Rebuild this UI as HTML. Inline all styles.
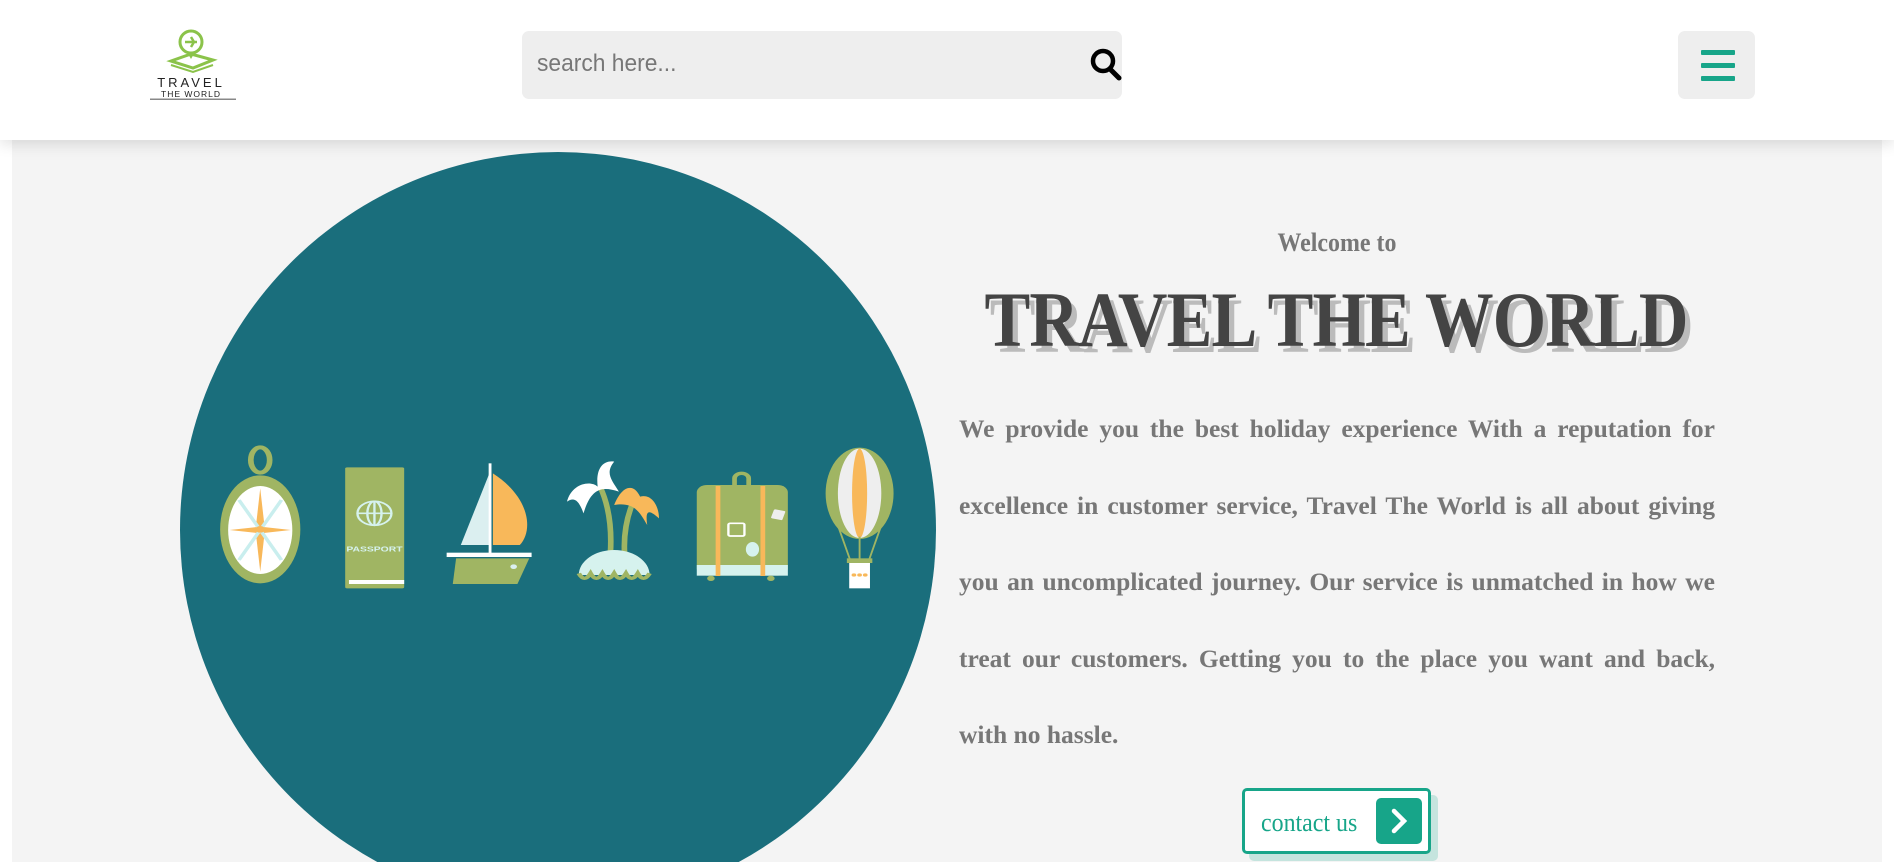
<!DOCTYPE html>
<html><head><meta charset="utf-8"><style>
*{margin:0;padding:0;box-sizing:border-box}
html,body{width:1894px;height:862px;overflow:hidden;background:#fff;font-family:"Liberation Serif",serif}
header{position:absolute;left:0;top:0;width:1894px;height:140px;background:#fff;box-shadow:0 4px 14px rgba(0,0,0,.12);z-index:2}
.search{position:absolute;left:522px;top:31px;width:600px;height:68px;background:#eee;border-radius:7px}
.search span{position:absolute;left:15px;top:19px;font:24px "Liberation Sans",sans-serif;color:#777;transform:scaleX(.95);transform-origin:left}
.menu{position:absolute;left:1678px;top:31px;width:77px;height:68px;background:#eee;border-radius:7px}
.menu i{position:absolute;left:23px;width:34px;height:5px;background:#17a589;border-radius:1px}
main{position:absolute;left:12px;top:140px;width:1870px;height:722px;background:#f4f4f4;overflow:hidden}
.circ{position:absolute;left:168px;top:12px;width:756px;height:710px;overflow:hidden}
.circ div{position:absolute;left:0;top:0;width:756px;height:756px;border-radius:50%;background:#1a6e7c}
.t{position:absolute;left:947px;width:756px;text-align:center;white-space:nowrap}
.welcome{top:88px;font-weight:bold;font-size:26px;color:#777;transform:scaleX(.92)}
.title{left:846px;width:956px;top:135px;font-weight:bold;font-size:78px;color:#444;text-shadow:6px 6px 0 #bbb;letter-spacing:-1px;transform:scaleX(.88)}
.p{position:absolute;left:947px;top:251px;width:756px;font-weight:bold;font-size:25.5px;line-height:76.5px;color:#777;text-align:justify}
.btn{position:absolute;left:1230px;top:648px;width:189px;height:66px;border:3px solid #17a589;border-radius:5px;background:#fff;box-shadow:7px 7px 0 #c5e4de}
.btn span{position:absolute;left:16px;top:17px;font-size:26px;color:#17a589;transform:scaleX(.92);transform-origin:left}
.btn b{position:absolute;left:131px;top:7px;width:46px;height:46px;background:#17a589;border-radius:5px}
</style></head><body>
<header>
<svg style="position:absolute;left:145px;top:28px" width="92" height="74" viewBox="0 0 92 74">
<circle cx="46" cy="14" r="11" fill="none" stroke="#8bc34a" stroke-width="3"/>
<path d="M40 14h12M46 9l3 5-3 5" stroke="#8bc34a" stroke-width="2.5" fill="none"/>
<path d="M42 24l4 7 4-7" fill="#8bc34a"/>
<path d="M26 33l20-7 22 6-20 8z" fill="none" stroke="#8bc34a" stroke-width="3"/>
<path d="M26 37l22 7 20-7" fill="none" stroke="#8bc34a" stroke-width="2"/>
<text x="46" y="59" text-anchor="middle" font-family="Liberation Sans" font-size="13" letter-spacing="3" fill="#222">TRAVEL</text>
<text x="46" y="69" text-anchor="middle" font-family="Liberation Sans" font-size="8.5" letter-spacing="1" fill="#222">THE WORLD</text>
<rect x="5" y="70.5" width="86" height="1.5" fill="#888"/>
</svg>
<div class="search"><span>search here...</span>
<svg style="position:absolute;left:568px;top:17px" width="32" height="34" viewBox="0 0 32 34"><circle cx="13" cy="13" r="10" fill="none" stroke="#000" stroke-width="4.5"/><path d="M20 21l9 9" stroke="#000" stroke-width="5" stroke-linecap="round"/></svg></div>
<div class="menu"><i style="top:19px"></i><i style="top:32px"></i><i style="top:45px"></i></div>
</header>
<main>
<div class="circ"><div></div></div>
<svg style="position:absolute;left:168px;top:290px" width="740" height="180" viewBox="0 0 1568 540" preserveAspectRatio="none">
<g fill="#a0b563">
<ellipse cx="170" cy="90" rx="20" ry="38" fill="none" stroke="#a0b563" stroke-width="12"/>
<ellipse cx="170" cy="298" rx="85" ry="162"/>
<ellipse cx="170" cy="300" rx="68" ry="132" fill="#fff"/>
<path d="M170 175l10 125-10 125-10-125z" fill="#f8b85a"/>
<path d="M105 300l65-10 65 10-65 10z" fill="#f8b85a"/>
<path d="M125 210l45 90-45 90M215 210l-45 90 45 90" stroke="#c9eeee" stroke-width="8" fill="none"/>
<circle cx="170" cy="298" r="10" fill="#f8b85a"/>
<rect x="350" y="112" width="125" height="363" rx="4"/>
<circle cx="412" cy="250" r="36" fill="none" stroke="#d6f2ee" stroke-width="5"/>
<ellipse cx="412" cy="250" rx="15" ry="36" fill="none" stroke="#d6f2ee" stroke-width="5"/>
<path d="M376 250h72M412 214v72" stroke="#d6f2ee" stroke-width="5"/>
<text x="412" y="365" text-anchor="middle" font-family="Liberation Sans" font-weight="bold" font-size="22" fill="#d6f2ee">PASSPORT</text>
<rect x="358" y="450" width="117" height="12" fill="#fff"/>
<path d="M595 345L657 125V345z" fill="#dbeff0"/>
<path d="M663 130C740 200 750 300 720 345H663z" fill="#f8b85a"/>
<rect x="654" y="100" width="6" height="272" fill="#fff"/>
<rect x="565" y="368" width="180" height="13" fill="#fff"/>
<path d="M585 385H740L715 462H578z"/>
<circle cx="707" cy="410" r="7" fill="#dbeff0"/>
<path d="M890 170C910 230 915 300 912 370" stroke="#a0b563" stroke-width="12" fill="none"/>
<path d="M965 200C945 260 940 320 942 370" stroke="#a0b563" stroke-width="12" fill="none"/>
<path d="M820 215C830 160 870 150 885 170C880 110 900 90 920 95C900 130 915 150 930 185C890 165 870 180 855 250C845 210 835 200 820 215z" fill="#fff"/>
<path d="M920 225C935 170 960 155 975 200C1000 190 1015 230 1015 265C995 240 985 235 990 285C975 250 965 215 920 225z" fill="#f8b85a"/>
<path d="M845 435A75 75 0 0 1 995 435z" fill="#d6f2ee"/>
<path d="M845 430q12 30 25 0q12 30 25 0q12 30 25 0q12 30 25 0q12 30 25 0q12 30 25 0" stroke="#a0b563" stroke-width="10" fill="none"/>
<path d="M1175 165v-20a15 15 0 0 1 30 0v20" stroke="#a0b563" stroke-width="10" fill="none"/>
<rect x="1095" y="165" width="193" height="272" rx="22"/>
<rect x="1095" y="405" width="193" height="32" fill="#d6f2ee"/>
<rect x="1135" y="168" width="10" height="270" fill="#f8b85a"/>
<rect x="1230" y="168" width="10" height="270" fill="#f8b85a"/>
<rect x="1162" y="280" width="34" height="38" rx="4" fill="none" stroke="#fff" stroke-width="5"/>
<rect x="1255" y="240" width="25" height="28" rx="3" fill="#eee" transform="rotate(15 1267 254)"/>
<ellipse cx="1213" cy="358" rx="14" ry="22" fill="#d6f2ee"/>
<circle cx="1125" cy="445" r="8"/><circle cx="1252" cy="445" r="8"/>
<ellipse cx="1440" cy="190" rx="72" ry="137"/>
<ellipse cx="1440" cy="190" rx="46" ry="134" fill="#eee"/>
<ellipse cx="1440" cy="190" rx="16" ry="134" fill="#f8b85a"/>
<path d="M1395 290l25 100M1485 290l-25 100M1440 320v70" stroke="#a0b563" stroke-width="4"/>
<rect x="1413" y="385" width="54" height="14"/>
<rect x="1418" y="399" width="44" height="76" fill="#fff"/>
<g fill="#f8b85a"><circle cx="1428" cy="435" r="5"/><circle cx="1440" cy="435" r="5"/><circle cx="1452" cy="435" r="5"/></g>
</g>
</svg>
<div class="t welcome">Welcome to</div>
<div class="t title">TRAVEL THE WORLD</div>
<div class="p">We provide you the best holiday experience With a reputation for excellence in customer service, Travel The World is all about giving you an uncomplicated journey. Our service is unmatched in how we treat our customers. Getting you to the place you want and back, with no hassle.</div>
<div class="btn"><span>contact us</span><b><svg width="46" height="46" viewBox="0 0 46 46"><path d="M18 13l10 10-10 10" stroke="#fff" stroke-width="4.5" fill="none" stroke-linecap="round"/></svg></b></div>
</main>
</body></html>
